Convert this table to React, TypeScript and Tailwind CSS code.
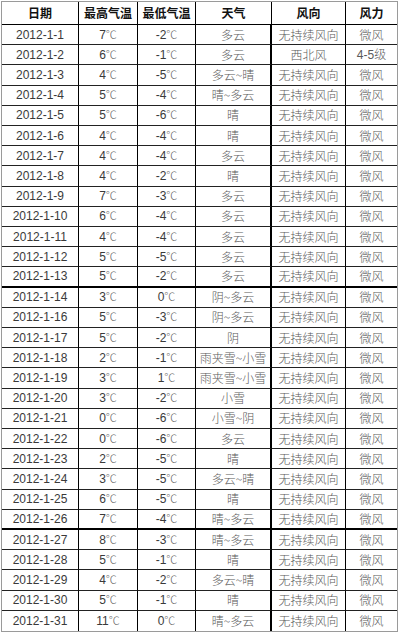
import React from "react";

type Row = [string, string, string, string, string, string];

const rows: Row[] = [
  ["2012-1-1", "7", "-2", "多云", "无持续风向", "微风"],
  ["2012-1-2", "6", "-1", "多云", "西北风", "4-5级"],
  ["2012-1-3", "4", "-5", "多云~晴", "无持续风向", "微风"],
  ["2012-1-4", "5", "-4", "晴~多云", "无持续风向", "微风"],
  ["2012-1-5", "5", "-6", "晴", "无持续风向", "微风"],
  ["2012-1-6", "4", "-4", "晴", "无持续风向", "微风"],
  ["2012-1-7", "4", "-4", "多云", "无持续风向", "微风"],
  ["2012-1-8", "4", "-2", "晴", "无持续风向", "微风"],
  ["2012-1-9", "7", "-3", "多云", "无持续风向", "微风"],
  ["2012-1-10", "6", "-4", "多云", "无持续风向", "微风"],
  ["2012-1-11", "4", "-4", "多云", "无持续风向", "微风"],
  ["2012-1-12", "5", "-5", "多云", "无持续风向", "微风"],
  ["2012-1-13", "5", "-2", "多云", "无持续风向", "微风"],
  ["2012-1-14", "3", "0", "阴~多云", "无持续风向", "微风"],
  ["2012-1-16", "5", "-3", "阴~多云", "无持续风向", "微风"],
  ["2012-1-17", "5", "-2", "阴", "无持续风向", "微风"],
  ["2012-1-18", "2", "-1", "雨夹雪~小雪", "无持续风向", "微风"],
  ["2012-1-19", "3", "1", "雨夹雪~小雪", "无持续风向", "微风"],
  ["2012-1-20", "3", "-2", "小雪", "无持续风向", "微风"],
  ["2012-1-21", "0", "-6", "小雪~阴", "无持续风向", "微风"],
  ["2012-1-22", "0", "-6", "多云", "无持续风向", "微风"],
  ["2012-1-23", "2", "-5", "晴", "无持续风向", "微风"],
  ["2012-1-24", "3", "-5", "多云~晴", "无持续风向", "微风"],
  ["2012-1-25", "6", "-5", "晴", "无持续风向", "微风"],
  ["2012-1-26", "7", "-4", "晴~多云", "无持续风向", "微风"],
  ["2012-1-27", "8", "-3", "晴~多云", "无持续风向", "微风"],
  ["2012-1-28", "5", "-1", "晴", "无持续风向", "微风"],
  ["2012-1-29", "4", "-2", "多云~晴", "无持续风向", "微风"],
  ["2012-1-30", "5", "-1", "晴", "无持续风向", "微风"],
  ["2012-1-31", "11", "0", "晴~多云", "无持续风向", "微风"],
];

const headers = ["日期", "最高气温", "最低气温", "天气", "风向", "风力"];

// rows after which the scan shows a heavier rule
const heavy = new Set([12, 24]);

const sans = "font-['Liberation_Sans','Noto_Sans_CJK_SC',sans-serif]";
const cjk = "font-['Noto_Sans_CJK_SC',sans-serif]";

function Temp({ v }: { v: string }) {
  return (
    <span className={`${sans} text-[12px] text-[#3a3a3a]`}>
      {v}
      <span className={`${cjk} text-[11px] font-light text-[#666]`}>℃</span>
    </span>
  );
}

export default function App() {
  return (
    <div className="w-[400px] h-[633px] bg-white">
      <div className="ml-px mt-px w-[397px] h-[631px] border border-[#9a9a9a] grid grid-cols-[77px_59px_58px_76px_74px_minmax(0,1fr)] grid-rows-[23px_repeat(30,minmax(0,1fr))]">
        {headers.map((h, i) => (
          <div
            key={h}
            className={`flex items-center justify-center border-b border-black ${i < 5 ? "border-r" : ""} ${cjk} text-[12px] font-bold text-[#111]`}
          >
            {h}
          </div>
        ))}
        {rows.map((r, ri) => {
          const bb = ri === rows.length - 1 ? "" : heavy.has(ri) ? "border-b-2 border-b-black" : "border-b border-b-[#222]";
          return (
            <React.Fragment key={r[0]}>
              <div className={`flex items-center justify-center border-r border-r-black ${bb} ${sans} text-[12px] text-[#3a3a3a]`}>
                {r[0]}
              </div>
              <div className={`flex items-center justify-center border-r border-r-black ${bb}`}>
                <Temp v={r[1]} />
              </div>
              <div className={`flex items-center justify-center border-r border-r-black ${bb}`}>
                <Temp v={r[2]} />
              </div>
              <div className={`flex items-center justify-center border-r-2 border-r-black ${bb} ${cjk} text-[12px] font-light text-[#5a5a5a] whitespace-nowrap`}>
                {r[3]}
              </div>
              <div className={`flex items-center justify-center border-r border-r-black ${bb} ${cjk} text-[12px] font-light text-[#5a5a5a]`}>
                {r[4]}
              </div>
              <div className={`flex items-center justify-center ${bb} ${r[5] === "4-5级" ? sans : cjk} text-[12px] font-light text-[#5a5a5a]`}>
                {r[5]}
              </div>
            </React.Fragment>
          );
        })}
      </div>
    </div>
  );
}
